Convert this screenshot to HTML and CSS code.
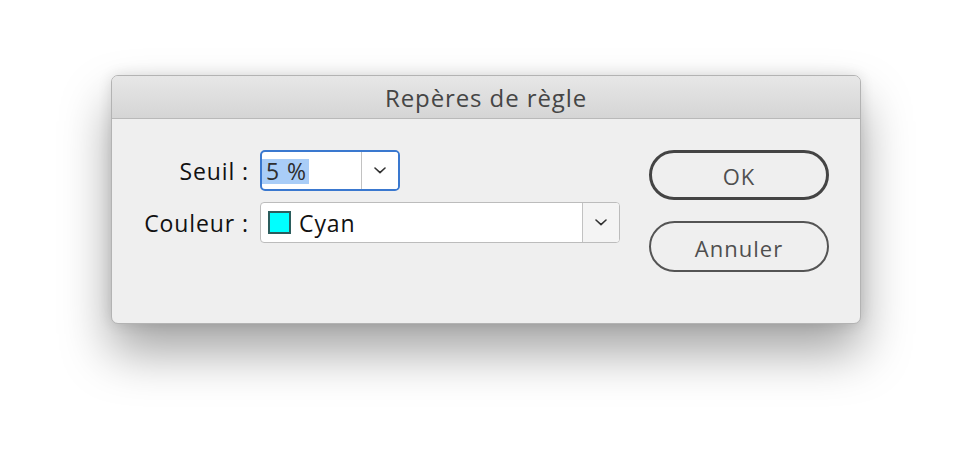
FILE: index.html
```html
<!DOCTYPE html>
<html lang="fr">
<head>
<meta charset="utf-8">
<title>Repères de règle</title>
<link rel="stylesheet" href="styles.css">
</head>
<body>
<div class="dialog">
  <div class="titlebar">Repères de règle</div>
  <div class="content">
    <div class="form">
      <label class="label">Seuil :</label>
      <div class="combo combo-focus combo-seuil">
        <div class="field"><span class="sel">5 %</span></div>
        <div class="drop">
          <svg width="12" height="7" viewBox="0 0 12 7"><polyline points="1,1 6,5.6 11,1" fill="none" stroke="#333" stroke-width="1.6" stroke-linecap="round" stroke-linejoin="round"/></svg>
        </div>
      </div>
      <label class="label">Couleur :</label>
      <div class="combo combo-color">
        <div class="field"><span class="swatch"></span><span class="val">Cyan</span></div>
        <div class="drop drop-grey">
          <svg width="12" height="7" viewBox="0 0 12 7"><polyline points="1,1 6,5.6 11,1" fill="none" stroke="#333" stroke-width="1.6" stroke-linecap="round" stroke-linejoin="round"/></svg>
        </div>
      </div>
    </div>
    <div class="buttons">
      <button class="btn btn-default">OK</button>
      <button class="btn">Annuler</button>
    </div>
  </div>
</div>
</body>
</html>
```
FILE: styles.css
```css
html, body {
  margin: 0;
  padding: 0;
  background: #ffffff;
}
body {
  min-height: 472px;
  box-sizing: border-box;
  padding: 75px 0 0 111px;
  font-family: "Open Sans", "Noto Sans", sans-serif;
}
.dialog {
  width: 750px;
  height: 249px;
  box-sizing: border-box;
  background: #efefef;
  border: 1px solid #b3b3b3;
  border-radius: 7px;
  overflow: hidden;
  box-shadow: 0 28px 50px rgba(0, 0, 0, 0.36), 0 0 14px rgba(0, 0, 0, 0.12);
}
.titlebar {
  height: 43px;
  box-sizing: border-box;
  border-bottom: 1px solid #b9b9b9;
  background: linear-gradient(#e7e7e7, #d5d5d5);
  display: flex;
  align-items: center;
  justify-content: center;
  font-size: 24px;
  letter-spacing: 0.9px;
  color: #454545;
  padding-top: 1px;
}
.content {
  display: flex;
  justify-content: space-between;
  padding: 31px 31px 0 0;
}
.form {
  display: grid;
  grid-template-columns: 137px auto;
  column-gap: 11px;
  row-gap: 11px;
  align-items: center;
  align-content: start;
}
.label {
  text-align: right;
  font-size: 23px;
  letter-spacing: 0.9px;
  color: #111;
}
.combo {
  display: flex;
  height: 41px;
  box-sizing: border-box;
  border: 1.5px solid #bcbcbc;
  border-radius: 4px;
  background: #fff;
  overflow: hidden;
}
.combo-focus {
  border: 2px solid #3a78cf;
  border-radius: 5px;
}
.combo-seuil { width: 140px; }
.combo-color { width: 360px; }
.field {
  flex: 1;
  display: flex;
  align-items: center;
  font-size: 23px;
  letter-spacing: 0.9px;
  color: #111;
}
.combo-color .field { padding-left: 7px; }
.sel {
  background: #a9cdf7;
  color: #2e2e2e;
  line-height: 25px;
  padding: 0 2px 0 4px;
  margin-top: 1px;
}
.swatch {
  width: 23px;
  height: 23px;
  box-sizing: border-box;
  border: 2px solid #2b5d5d;
  background: #00ffff;
  margin-right: 8px;
}
.drop {
  width: 36px;
  border-left: 1.5px solid #c2c2c2;
  display: flex;
  align-items: center;
  justify-content: center;
  background: #fff;
}
.drop-grey { background: #f4f4f4; }
.buttons {
  display: flex;
  flex-direction: column;
  gap: 21px;
}
.btn {
  width: 180px;
  height: 51px;
  box-sizing: border-box;
  border: 2px solid #545454;
  border-radius: 26px;
  background: #efefef;
  font-family: "Open Sans", "Noto Sans", sans-serif;
  font-size: 22px;
  letter-spacing: 1px;
  color: #4f4f4f;
  padding: 2px 0 0 0;
}
.btn-default {
  border: 3px solid #444;
  height: 50px;
}
```
